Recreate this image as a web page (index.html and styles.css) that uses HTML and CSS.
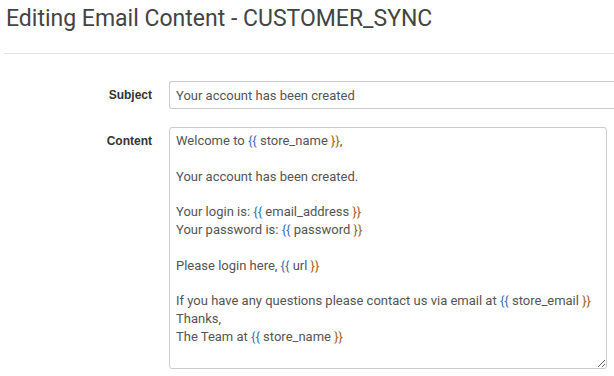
FILE: index.html
```html
<!DOCTYPE html>
<html lang="en">
<head>
  <meta charset="UTF-8" />
  <meta name="viewport" content="width=device-width, initial-scale=1.0"/>
  <title>Editing Email Content - CUSTOMER_SYNC</title>
  <link rel="stylesheet" href="styles.css">
</head>
<body>
  <div class="page">
    <h1 class="page-title">Editing Email Content - CUSTOMER_SYNC</h1>
    <hr class="divider" />

    <form class="email-form">
      <label class="field-label" for="subject">Subject</label>
      <input id="subject" class="field-input" type="text" value="Your account has been created" />

      <label class="field-label">Content</label>
      <div class="field-content">Welcome to <span class="open">{{</span> store_name <span class="close">}}</span>,

Your account has been created.

Your login is: <span class="open">{{</span> email_address <span class="close">}}</span>
Your password is: <span class="open">{{</span> password <span class="close">}}</span>

Please login here, <span class="open">{{</span> url <span class="close">}}</span>

If you have any questions please contact us via email at <span class="open">{{</span> store_email <span class="close">}}</span>
Thanks,
The Team at <span class="open">{{</span> store_name <span class="close">}}</span></div>
    </form>
  </div>
</body>
</html>
```

FILE: styles.css
```css
* {
  box-sizing: border-box;
}

body {
  margin: 0;
  font-family: Roboto, "Liberation Sans", sans-serif;
  background: #fff;
  color: #555;
  overflow: hidden;
}

.page {
  padding: 0 0 0 4px;
}

.page-title {
  margin: 0;
  padding: 5px 0 0 2px;
  font-size: 23px;
  font-weight: 400;
  line-height: 28px;
  color: #444;
}

.divider {
  margin: 20px 0 0;
  border: none;
  border-top: 1px solid #e5e5e5;
}

.email-form {
  display: grid;
  grid-template-columns: 148px 1fr;
  column-gap: 17px;
  row-gap: 18px;
  margin-top: 27px;
}

.field-label {
  font-family: "Liberation Sans", Arial, sans-serif;
  font-weight: bold;
  font-size: 12px;
  color: #333;
  text-align: right;
  padding-top: 7px;
}

.field-input {
  width: 100%;
  height: 28px;
  padding: 4px 6px;
  font-family: Roboto, "Liberation Sans", sans-serif;
  font-size: 13px;
  color: #555;
  border: 1px solid #ccc;
  border-right: none;
  border-radius: 3px 0 0 3px;
  background: #fff;
}

.field-content {
  width: 438px;
  height: 242px;
  padding: 4px 6px;
  font-size: 13px;
  line-height: 17.8px;
  color: #555;
  white-space: pre-wrap;
  border: 1px solid #ccc;
  border-radius: 3px;
  resize: both;
  overflow: auto;
}

.open { color: #3f73b8; }
.close { color: #a0662e; }
```
